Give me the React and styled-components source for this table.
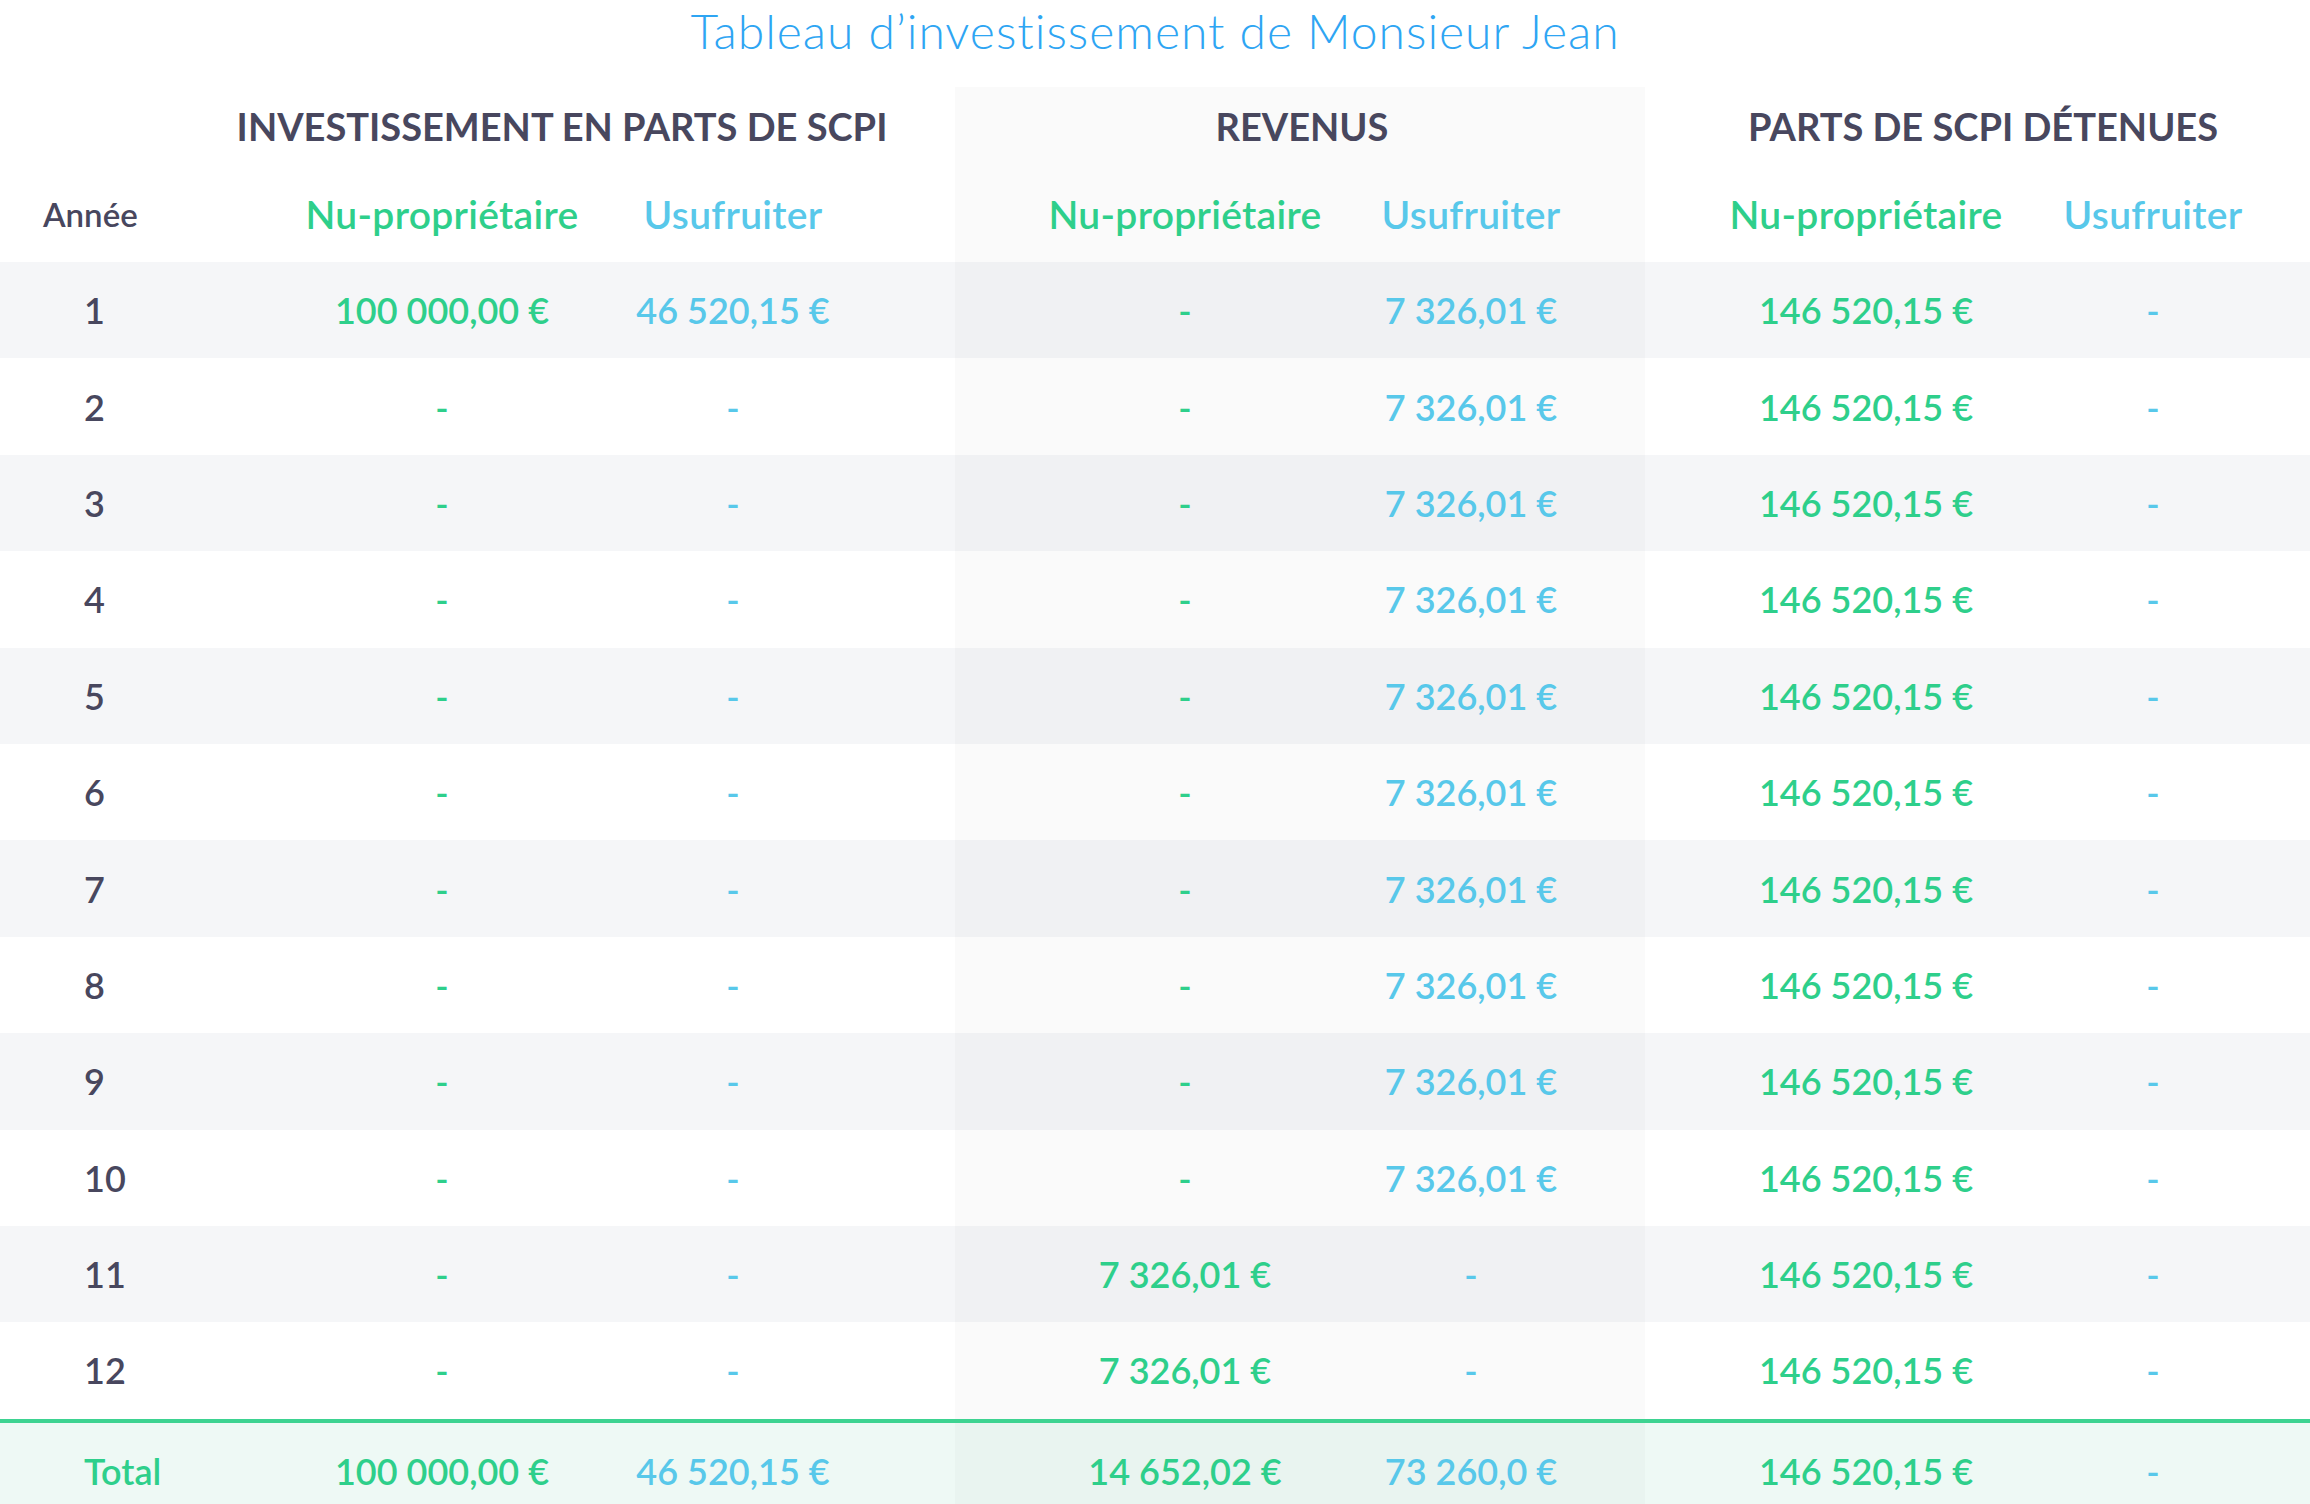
import React from 'react';
import styled, { createGlobalStyle } from 'styled-components';

const GlobalStyle = createGlobalStyle`
  body {
    margin: 0;
    background: #ffffff;
    font-family: Lato, "Open Sans", sans-serif;
  }
`;

const GREEN = '#2ecf8b';
const BLUE = '#58c8ea';
const DARK = '#48475e';

// column tracks + inner padding so each text sits where the reference has it
const COLS = [
  { pl: 84, pr: 0 },
  { pl: 0, pr: 0 },
  { pl: 0, pr: 76 },
  { pl: 85, pr: 0, shade: true },
  { pl: 0, pr: 33, shade: true },
  { pl: 77, pr: 0 },
  { pl: 0, pr: 14 },
];

const Page = styled.div`
  width: 2310px;
`;

const Title = styled.h1`
  margin: 0;
  padding-bottom: 25px;
  height: 62px;
  line-height: 62px;
  text-align: center;
  font-family: Lato, sans-serif;
  font-weight: 300;
  font-size: 48px;
  letter-spacing: 1px;
  color: #2ea5f3;
`;

const Row = styled.div`
  display: grid;
  grid-template-columns: 297px 290px 368px 375px 315px 365px 1fr;
  height: ${({ $h }) => $h}px;
  background: ${({ $bg }) => $bg || 'transparent'};
  border-top: ${({ $line }) => ($line ? `4px solid #3dd391` : 'none')};
`;

const Cell = styled.div`
  display: flex;
  align-items: center;
  justify-content: ${({ $left }) => ($left ? 'flex-start' : 'center')};
  padding-left: ${({ $pl }) => $pl || 0}px;
  padding-right: ${({ $pr }) => $pr || 0}px;
  background: ${({ $shade }) => ($shade ? 'rgba(0, 0, 0, 0.021)' : 'transparent')};
  color: ${({ $color }) => $color};
  font-size: 36px;
  font-weight: 600;
  white-space: nowrap;
  grid-column: ${({ $span }) => ($span ? `span ${$span}` : 'auto')};
`;

const HeadCell = styled(Cell)`
  font-size: 39px;
  letter-spacing: 0.3px;
`;

const YearHead = styled(Cell)`
  font-size: 33px;
  font-weight: 600;
`;

const GroupCell = styled(Cell)`
  font-weight: 700;
  font-size: 38px;
  letter-spacing: 0;
  text-transform: uppercase;
  color: ${DARK};
`;

const rows = Array.from({ length: 12 }, (_, i) => {
  const y = i + 1;
  return [
    String(y),
    y === 1 ? '100 000,00 €' : '-',
    y === 1 ? '46 520,15 €' : '-',
    y > 10 ? '7 326,01 €' : '-',
    y > 10 ? '-' : '7 326,01 €',
    '146 520,15 €',
    '-',
  ];
});

const total = ['Total', '100 000,00 €', '46 520,15 €', '14 652,02 €', '73 260,0 €', '146 520,15 €', '-'];

const colorFor = (i) => (i % 2 === 1 ? GREEN : BLUE);

function DataRow({ values, bg, line, first }) {
  return (
    <Row $h={line ? 96 : 96.4} $bg={bg} $line={line}>
      {values.map((v, i) => (
        <Cell
          key={i}
          $left={i === 0}
          $pl={COLS[i].pl}
          $pr={COLS[i].pr}
          $shade={COLS[i].shade}
          $color={i === 0 ? first : colorFor(i)}
        >
          {v}
        </Cell>
      ))}
    </Row>
  );
}

export default function App() {
  const heads = ['Nu-propriétaire', 'Usufruiter', 'Nu-propriétaire', 'Usufruiter', 'Nu-propriétaire', 'Usufruiter'];
  return (
    <Page>
      <GlobalStyle />
      <Title>Tableau d’investissement de Monsieur Jean</Title>

      <Row $h={78}>
        <Cell />
        <GroupCell $span={2} $pr={128}>Investissement en parts de SCPI</GroupCell>
        <GroupCell $span={2} $pl={4} $shade>Revenus</GroupCell>
        <GroupCell $span={2} $pl={11}>Parts de SCPI détenues</GroupCell>
      </Row>

      <Row $h={97}>
        <YearHead $left $pl={43} $color={DARK}>
          Année
        </YearHead>
        {heads.map((h, i) => (
          <HeadCell
            key={i}
            $pl={COLS[i + 1].pl}
            $pr={COLS[i + 1].pr}
            $shade={COLS[i + 1].shade}
            $color={colorFor(i + 1)}
          >
            {h}
          </HeadCell>
        ))}
      </Row>

      {rows.map((r, i) => (
        <DataRow key={i} values={r} bg={i % 2 === 0 ? '#f5f6f8' : '#ffffff'} first={DARK} />
      ))}

      <DataRow values={total} bg="#eef9f5" line first={GREEN} />
    </Page>
  );
}
